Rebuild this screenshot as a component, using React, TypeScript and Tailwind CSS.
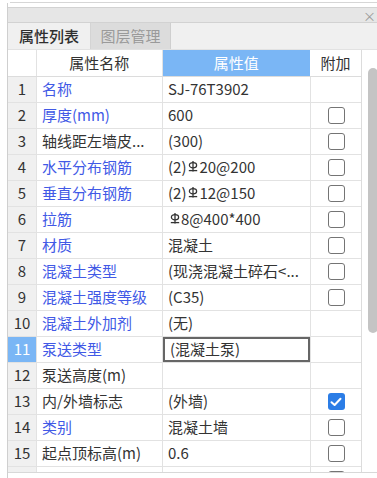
import React from "react"

// rebar grade symbol (HRB400), drawn since no font carries it
function Rebar() {
  return (
    <svg width="10" height="11" viewBox="0 0 10 11" className="inline-block ml-[2px] mr-[1px] -translate-y-[1px]">
      <ellipse cx="5" cy="4.2" rx="3.6" ry="2.6" fill="none" stroke="#333" strokeWidth="1.3" />
      <line x1="5" y1="0" x2="5" y2="10.5" stroke="#333" strokeWidth="1.3" />
      <line x1="0.8" y1="9.6" x2="9.2" y2="9.6" stroke="#333" strokeWidth="1.3" />
    </svg>
  )
}

type Row = {
  name: string
  blue: boolean
  value: React.ReactNode
  check: "none" | "off" | "on"
}

const rows: Row[] = [
  { name: "名称", blue: true, value: "SJ-76T3902", check: "none" },
  { name: "厚度(mm)", blue: true, value: "600", check: "off" },
  { name: "轴线距左墙皮...", blue: false, value: "(300)", check: "off" },
  { name: "水平分布钢筋", blue: true, value: <>(2)<Rebar />20@200</>, check: "off" },
  { name: "垂直分布钢筋", blue: true, value: <>(2)<Rebar />12@150</>, check: "off" },
  { name: "拉筋", blue: true, value: <><Rebar />8@400*400</>, check: "off" },
  { name: "材质", blue: true, value: "混凝土", check: "off" },
  { name: "混凝土类型", blue: true, value: "(现浇混凝土碎石<...", check: "off" },
  { name: "混凝土强度等级", blue: true, value: "(C35)", check: "off" },
  { name: "混凝土外加剂", blue: true, value: "(无)", check: "none" },
  { name: "泵送类型", blue: true, value: "(混凝土泵)", check: "none" },
  { name: "泵送高度(m)", blue: false, value: "", check: "none" },
  { name: "内/外墙标志", blue: false, value: "(外墙)", check: "on" },
  { name: "类别", blue: true, value: "混凝土墙", check: "off" },
  { name: "起点顶标高(m)", blue: false, value: "0.6", check: "off" },
  { name: "", blue: false, value: "", check: "off" },
]

function Checkbox({ on }: { on: boolean }) {
  if (on) {
    return (
      <div className="w-[17px] h-[17px] rounded-[3px] bg-[#2b7de6] flex items-center justify-center">
        <svg width="12" height="10" viewBox="0 0 12 10">
          <path d="M1.5 5.2 L4.6 8 L10.5 1.8" fill="none" stroke="white" strokeWidth="2" strokeLinecap="round" strokeLinejoin="round" />
        </svg>
      </div>
    )
  }
  return <div className="w-[17px] h-[17px] rounded-[3px] border border-[#747474] bg-white" />
}

export default function App() {
  return (
    <div
      className="w-[377px] h-[478px] bg-white overflow-hidden text-[15px] text-[#333]"
      style={{ fontFamily: "'Noto Sans CJK SC', 'Noto Sans', sans-serif" }}
    >
      <div className="h-[3px] ml-[10px] border-b border-[#d6d6d6]" />
      <div className="ml-[7px] border-l border-[#cfcfcf] h-[475px] flex flex-col">
        <div className="h-[4px] bg-white" />

        {/* title bar */}
        <div className="h-[16px] bg-[#e6e6e6] border-t border-b border-[#d2d2d2] flex items-center justify-end pr-[1px]">
          <span className="text-[13px] leading-none text-[#9a9a9a]">×</span>
        </div>

        {/* tabs */}
        <div className="h-[27px] bg-[#f0f0f0] flex items-stretch border-b border-[#e2e2e2]">
          <div className="w-[83px] flex items-center justify-center font-medium text-[#2f2f2f] border-r border-[#d4d4d4]">
            属性列表
          </div>
          <div className="w-[80px] flex items-center justify-center bg-[#dcdcdc] text-[#9a9a9a] border-r border-[#cfcfcf]">
            图层管理
          </div>
          <div className="flex-1" />
        </div>

        {/* grid */}
        <div className="h-[423px] flex border-b border-[#d8d8d8] overflow-hidden">
          <div className="w-[354px] flex flex-col border-r border-[#dcdcdc]">
            <div className="h-[27px] shrink-0 flex border-b border-[#dcdcdc]">
              <div className="w-[29px] bg-white border-r border-[#e2e2e2]" />
              <div className="w-[126px] flex items-center justify-center border-r border-[#e2e2e2]">属性名称</div>
              <div className="w-[148px] flex items-center justify-center bg-[#7ab6f5] text-white">属性值</div>
              <div className="w-[51px] flex items-center justify-center">附加</div>
            </div>
            {rows.map((r, i) => {
              const sel = i === 10
              const last = i === rows.length - 1
              return (
                <div key={i} className="h-[26px] shrink-0 flex border-b border-[#e2e2e2]">
                  <div
                    className={`w-[29px] flex items-center justify-center border-r border-[#e2e2e2] ${
                      sel ? "bg-[#7ab6f5] text-white" : "bg-[#f0f0f0] text-[#333]"
                    }`}
                  >
                    {last ? "" : i + 1}
                  </div>
                  <div
                    className={`w-[126px] pl-[5px] flex items-center whitespace-nowrap overflow-hidden border-r border-[#e2e2e2] ${
                      r.blue ? "text-[#4159e6]" : "text-[#333]"
                    }`}
                  >
                    {r.name}
                  </div>
                  <div className="w-[148px] flex items-stretch border-r border-[#e2e2e2]">
                    <div
                      className={`flex-1 pl-[5px] flex items-center whitespace-nowrap overflow-hidden ${
                        sel ? "border-2 border-[#666] pl-[3px]" : ""
                      }`}
                    >
                      {r.value}
                    </div>
                  </div>
                  <div className="w-[50px] flex items-center justify-center">
                    {r.check !== "none" && <Checkbox on={r.check === "on"} />}
                  </div>
                </div>
              )
            })}
          </div>

          {/* scrollbar */}
          <div className="flex-1 bg-white">
            <div className="mt-[18px] ml-[6px] w-[10px] h-[265px] rounded-full bg-[#c4c4c4]" />
          </div>
        </div>
      </div>
    </div>
  )
}
